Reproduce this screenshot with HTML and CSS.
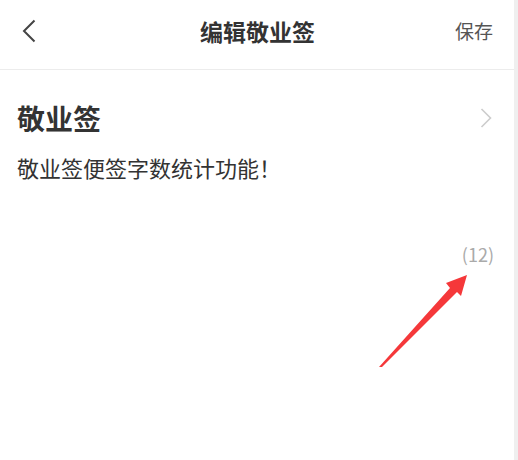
FILE: index.html
```html
<!DOCTYPE html>
<html lang="zh-CN">
<head>
  <meta charset="UTF-8">
  <meta name="viewport" content="width=device-width, initial-scale=1.0">
  <title>编辑敬业签</title>
  <link rel="stylesheet" href="styles.css">
</head>
<body>
  <div class="page">
    <header class="topbar">
      <span class="back">
        <svg width="14" height="24" viewBox="0 0 14 24"><path d="M12.5 1.5 L2 12 L12.5 22.5" fill="none" stroke="#444" stroke-width="2"/></svg>
      </span>
      <h1 class="title">编辑敬业签</h1>
      <span class="save">保存</span>
    </header>

    <div class="note">
      <div class="note-head">
        <h2 class="note-title">敬业签</h2>
        <svg class="more" width="12" height="20" viewBox="0 0 12 20"><path d="M1.5 1 L10.5 10 L1.5 19" fill="none" stroke="#ccc" stroke-width="1.6"/></svg>
      </div>
      <p class="note-text">敬业签便签字数统计功能！</p>
      <div class="count">(12)</div>
    </div>

    <!-- annotation arrow -->
    <svg class="arrow" width="518" height="460" viewBox="0 0 518 460">
      <polygon points="379,367 450,288 446,283 467,275 461,296 457,292 382,367" fill="#f5383a"/>
    </svg>
  </div>
</body>
</html>
```

FILE: styles.css
```css
body {
  margin: 0;
  padding: 0;
  background-color: #fff;
  font-family: "Noto Sans CJK SC", "Noto Sans", sans-serif;
  color: #333;
}

.page {
  position: relative;
  height: 460px;
  border-right: 4px solid #efefef;
  box-sizing: border-box;
}

.topbar {
  display: flex;
  align-items: center;
  justify-content: space-between;
  height: 61px;
  padding: 0 21px 8px 22px;
  border-bottom: 1px solid #ececec;
}

.back {
  display: flex;
  width: 40px;
}

.title {
  margin: 0;
  font-size: 23px;
  font-weight: bold;
  color: #333;
}

.save {
  width: 40px;
  text-align: right;
  font-size: 19px;
  color: #555;
}

.note {
  padding: 26px 20px 0 17px;
}

.note-head {
  display: flex;
  align-items: center;
  justify-content: space-between;
  height: 44px;
}

.note-title {
  margin: 0;
  font-size: 28px;
  font-weight: bold;
  color: #333;
}

.more {
  margin-right: 2px;
}

.note-text {
  margin: 12px 0 0;
  font-size: 22px;
  color: #333;
  line-height: 1.4;
}

.count {
  margin-top: 58px;
  text-align: right;
  font-size: 18px;
  color: #aaa;
}

.arrow {
  position: absolute;
  left: 0;
  top: 0;
}
```
